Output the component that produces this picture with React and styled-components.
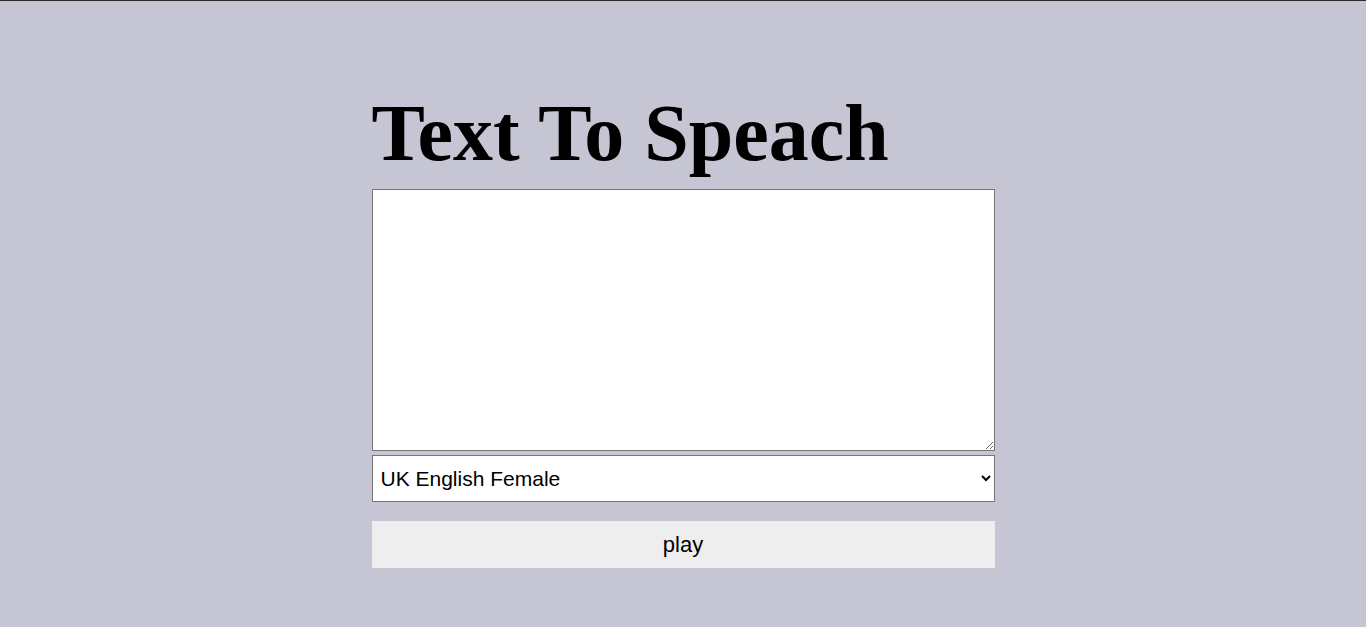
import React, { useState } from "react"
import styled, { createGlobalStyle } from "styled-components"

const GlobalStyle = createGlobalStyle`
  html, body {
    margin: 0;
    padding: 0;
  }
  body {
    background: #c5c5d3;
    border-top: 1px solid #2b2b2b;
    min-height: 626px;
    font-family: "Liberation Serif", "Times New Roman", serif;
  }
`

const Container = styled.div`
  width: 623px;
  margin: 0 auto;
  padding-top: 82px;
  display: flex;
  flex-direction: column;
`

const Title = styled.h1`
  margin: 0 0 6px;
  font-family: "Liberation Serif", "Times New Roman", serif;
  font-size: 80px;
  font-weight: bold;
  line-height: 100px;
  color: #000;
`

const TextBox = styled.textarea`
  box-sizing: border-box;
  width: 100%;
  height: 262px;
  margin: 0;
  padding: 2px;
  border: 1px solid #767676;
  background: #fff;
  font-family: "Liberation Sans", Arial, sans-serif;
  font-size: 20px;
  resize: vertical;
`

const Select = styled.select`
  box-sizing: border-box;
  width: 100%;
  height: 47px;
  margin-top: 4px;
  padding: 0 4px;
  border: 1px solid #767676;
  border-radius: 0;
  background: #fff;
  color: #000;
  font-family: "Liberation Sans", Arial, sans-serif;
  font-size: 21px;
`

const PlayButton = styled.button`
  width: 100%;
  height: 47px;
  margin-top: 19px;
  border: none;
  background: #eeeeee;
  color: #000;
  font-family: "Liberation Sans", Arial, sans-serif;
  font-size: 22px;
  cursor: pointer;
`

const voices = [
  "UK English Female",
  "UK English Male",
  "US English Female",
  "US English Male",
]

export default function App() {
  const [text, setText] = useState("")
  const [voice, setVoice] = useState(voices[0])

  return (
    <>
      <GlobalStyle />
      <Container>
        <Title>Text To Speach</Title>
        <TextBox value={text} onChange={e => setText(e.target.value)} />
        <Select value={voice} onChange={e => setVoice(e.target.value)}>
          {voices.map(v => (
            <option key={v} value={v}>
              {v}
            </option>
          ))}
        </Select>
        <PlayButton type="button">play</PlayButton>
      </Container>
    </>
  )
}
